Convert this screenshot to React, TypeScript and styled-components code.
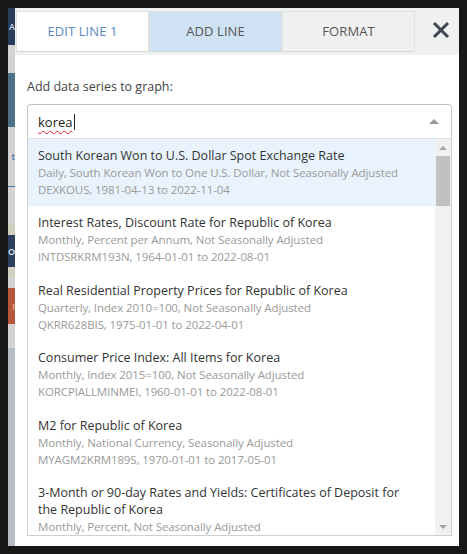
import React from "react";
import styled, { createGlobalStyle } from "styled-components";

const Global = createGlobalStyle`
  html, body { margin: 0; padding: 0; background: #181818; }
  * { box-sizing: border-box; }
`;

const Frame = styled.div`
  width: 467px;
  height: 554px;
  padding: 8px;
  display: flex;
  background: #181818;
  font-family: "Open Sans", "DejaVu Sans", sans-serif;
`;

const Strip = styled.div`
  width: 7px;
  display: flex;
  flex-direction: column;
  overflow: hidden;
`;

const StripBlock = styled.div<{ $h: number; $bg: string; $fg?: string }>`
  height: ${(p) => p.$h}px;
  flex: ${(p) => (p.$h === 0 ? "1" : "none")};
  background: ${(p) => p.$bg};
  color: ${(p) => p.$fg || "transparent"};
  display: flex;
  align-items: center;
  justify-content: flex-end;
  font-size: 9px;
  font-weight: 600;
  white-space: nowrap;
`;

const Modal = styled.div`
  flex: 1;
  display: flex;
  flex-direction: column;
  background: #fff;
`;

const Header = styled.div`
  height: 47px;
  background: #eff1f1;
  display: flex;
  padding: 3px 0 3px 1px;
`;

const Tab = styled.div<{ $bg: string; $color: string }>`
  width: 133px;
  height: 41px;
  background: ${(p) => p.$bg};
  color: ${(p) => p.$color};
  border: 1px solid #dfe1e1;
  border-bottom-color: #d4d6d6;
  display: flex;
  align-items: center;
  justify-content: center;
  font-size: 13px;
  letter-spacing: 0.1px;
  padding-bottom: 2px;
`;

const Close = styled.div`
  flex: 1;
  display: flex;
  align-items: center;
  justify-content: center;
  padding: 0 0 4px 8px;
`;

const Body = styled.div`
  flex: 1;
  display: flex;
  flex-direction: column;
  padding: 23px 7px 10px 12px;
  min-height: 0;
`;

const Label = styled.div`
  font-size: 12.5px;
  line-height: 17px;
  color: #444;
  margin-bottom: 9px;
`;

const Input = styled.div`
  height: 35px;
  flex: none;
  border: 1px solid #c4c4c4;
  border-bottom: 1px solid #e2e2e2;
  border-radius: 4px 4px 0 0;
  display: flex;
  align-items: center;
  padding: 0 10px;
  font-size: 13px;
  color: #222;
`;

const Typed = styled.span`
  text-decoration: underline wavy #e02020;
  text-decoration-thickness: 1px;
  text-underline-offset: 3px;
`;

const Caret = styled.span`
  display: inline-block;
  width: 1px;
  height: 16px;
  background: #222;
  margin-left: 1px;
`;

const Spacer = styled.div`
  flex: 1;
`;

const UpTriangle = styled.div`
  width: 0;
  height: 0;
  border-left: 5px solid transparent;
  border-right: 5px solid transparent;
  border-bottom: 5px solid #999;
  margin-right: 2px;
`;

const List = styled.div`
  flex: 1;
  min-height: 0;
  display: flex;
  border: 1px solid #cfcfcf;
  border-top: none;
  overflow: hidden;
`;

const Items = styled.div`
  flex: 1;
  display: flex;
  flex-direction: column;
  overflow: hidden;
`;

const Item = styled.div<{ $active?: boolean }>`
  flex: none;
  padding: 8px 10px 8.4px 10px;
  background: ${(p) => (p.$active ? "#e9f3fd" : "#fff")};
`;

const Title = styled.div`
  font-size: 12.5px;
  line-height: 17px;
  color: #333;
  padding-right: 18px;
`;

const Sub = styled.div`
  font-size: 11.5px;
  letter-spacing: -0.1px;
  line-height: 17px;
  color: #9a9a9a;
`;

const ScrollBar = styled.div`
  width: 16px;
  background: #f1f1f1;
  display: flex;
  flex-direction: column;
  align-items: center;
`;

const ScrollArrow = styled.div<{ $down?: boolean }>`
  height: 17px;
  width: 16px;
  display: flex;
  align-items: center;
  justify-content: center;
  &::after {
    content: "";
    width: 0;
    height: 0;
    border-left: 4px solid transparent;
    border-right: 4px solid transparent;
    ${(p) =>
      p.$down
        ? "border-top: 4px solid #a3a3a3;"
        : "border-bottom: 4px solid #a3a3a3;"}
  }
`;

const Thumb = styled.div`
  width: 14px;
  height: 50px;
  background: #c1c1c1;
`;

type Series = { title: string; sub: string; id?: string };

const items: Series[] = [
  {
    title: "South Korean Won to U.S. Dollar Spot Exchange Rate",
    sub: "Daily, South Korean Won to One U.S. Dollar, Not Seasonally Adjusted",
    id: "DEXKOUS, 1981-04-13 to 2022-11-04",
  },
  {
    title: "Interest Rates, Discount Rate for Republic of Korea",
    sub: "Monthly, Percent per Annum, Not Seasonally Adjusted",
    id: "INTDSRKRM193N, 1964-01-01 to 2022-08-01",
  },
  {
    title: "Real Residential Property Prices for Republic of Korea",
    sub: "Quarterly, Index 2010=100, Not Seasonally Adjusted",
    id: "QKRR628BIS, 1975-01-01 to 2022-04-01",
  },
  {
    title: "Consumer Price Index: All Items for Korea",
    sub: "Monthly, Index 2015=100, Not Seasonally Adjusted",
    id: "KORCPIALLMINMEI, 1960-01-01 to 2022-08-01",
  },
  {
    title: "M2 for Republic of Korea",
    sub: "Monthly, National Currency, Seasonally Adjusted",
    id: "MYAGM2KRM189S, 1970-01-01 to 2017-05-01",
  },
  {
    title:
      "3-Month or 90-day Rates and Yields: Certificates of Deposit for the Republic of Korea",
    sub: "Monthly, Percent, Not Seasonally Adjusted",
  },
];

export default function App() {
  return (
    <>
      <Global />
      <Frame>
        <Strip>
          <StripBlock $h={37} $bg="#2b3d5c" $fg="#c9d3e0">
            A
          </StripBlock>
          <StripBlock $h={28} $bg="#d3d3d3" />
          <StripBlock $h={54} $bg="#4f7089" />
          <StripBlock $h={59} $bg="#d3d3d3" $fg="#3a6ea5">
            t
          </StripBlock>
          <StripBlock $h={1} $bg="#4a78a8" />
          <StripBlock $h={36} $bg="#d3d3d3" />
          <StripBlock $h={12} $bg="#cfd0be" />
          <StripBlock $h={32} $bg="#2d4060" $fg="#dfe6ee">
            O
          </StripBlock>
          <StripBlock $h={11} $bg="#cfd0be" />
          <StripBlock $h={10} $bg="#d3d3d3" />
          <StripBlock $h={36} $bg="#b9553a" $fg="#e9b9a8">
            I
          </StripBlock>
          <StripBlock $h={24} $bg="#d3d3d3" />
          <StripBlock $h={0} $bg="#b6bdc5" />
        </Strip>
        <Modal>
          <Header>
            <Tab $bg="#ffffff" $color="#5a89bf">
              EDIT LINE 1
            </Tab>
            <Tab $bg="#cfe2f3" $color="#555">
              ADD LINE
            </Tab>
            <Tab $bg="#f0f0f0" $color="#555">
              FORMAT
            </Tab>
            <Close>
              <svg width="18" height="18" viewBox="0 0 18 18">
                <path
                  d="M2 2 L16 16 M16 2 L2 16"
                  stroke="#3e4652"
                  strokeWidth="3"
                  strokeLinecap="butt"
                />
              </svg>
            </Close>
          </Header>
          <Body>
            <Label>Add data series to graph:</Label>
            <Input>
              <Typed>korea</Typed>
              <Caret />
              <Spacer />
              <UpTriangle />
            </Input>
            <List>
              <Items>
                {items.map((it, i) => (
                  <Item key={it.title} $active={i === 0}>
                    <Title>{it.title}</Title>
                    <Sub>{it.sub}</Sub>
                    {it.id && <Sub>{it.id}</Sub>}
                  </Item>
                ))}
              </Items>
              <ScrollBar>
                <ScrollArrow />
                <Thumb />
                <Spacer />
                <ScrollArrow $down />
              </ScrollBar>
            </List>
          </Body>
        </Modal>
      </Frame>
    </>
  );
}
